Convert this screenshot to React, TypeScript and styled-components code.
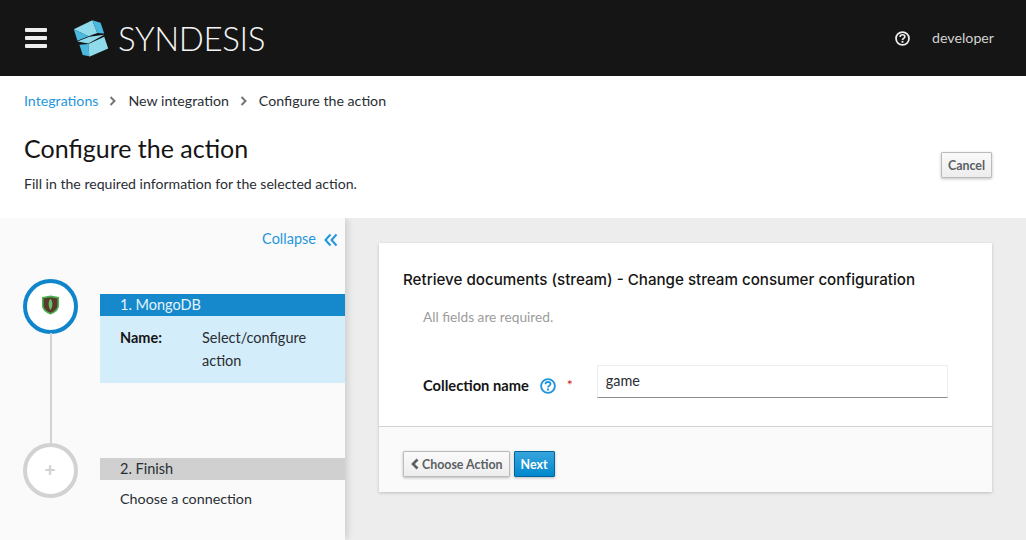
import styled, { createGlobalStyle } from 'styled-components';

const GlobalStyle = createGlobalStyle`
  html, body {
    margin: 0;
    padding: 0;
    height: 540px;
    overflow: hidden;
    background: #ededed;
    font-family: "Lato", "Liberation Sans", sans-serif;
    color: #151515;
    font-size: 14px;
  }
  * { box-sizing: border-box; }
`;

const Page = styled.div`
  width: 1026px;
  height: 540px;
  display: flex;
  flex-direction: column;
  overflow: hidden;
`;

const TopBar = styled.header`
  height: 76px;
  flex: none;
  background: #151515;
  display: flex;
  align-items: center;
  padding: 0 32px 0 25px;
`;

const Burger = styled.div`
  width: 22px;
  display: flex;
  flex-direction: column;
  gap: 4px;
  margin-right: 25px;

  span {
    height: 4px;
    border-radius: 1px;
    background: #ededed;
  }
`;

const Brand = styled.div`
  display: flex;
  align-items: center;
  gap: 8px;
  flex: 1;
`;

const Wordmark = styled.span`
  color: #f5f5f5;
  font-size: 33px;
  font-weight: 300;
  letter-spacing: -0.35px;
  line-height: 1;
`;

const UserName = styled.span`
  color: #d2d2d2;
  font-size: 14.2px;
  margin-left: 22px;
  position: relative;
  top: -1px;
`;

const Breadcrumbs = styled.nav`
  height: 50px;
  flex: none;
  background: #fff;
  display: flex;
  align-items: center;
  padding: 0 24px 1px;
  font-size: 14.2px;
  gap: 11px;
  color: #292e34;

  a {
    color: #1f96dc;
    text-decoration: none;
  }
`;

const PageHeader = styled.div`
  height: 92px;
  flex: none;
  background: #fff;
  display: flex;
  justify-content: space-between;
  align-items: flex-start;
  padding: 0 34px 0 24px;
`;

const Heading = styled.h1`
  margin: 5px 0 0;
  font-size: 25px;
  font-weight: 400;
  line-height: 34px;
`;

const Subheading = styled.p`
  margin: 9px 0 0;
  font-size: 14.1px;
  line-height: 20px;
  color: #292e34;
`;

const Button = styled.button<{ $primary?: boolean }>`
  height: 26px;
  padding: 0 6px;
  font-family: inherit;
  font-size: 12.4px;
  font-weight: 700;
  border-radius: 1px;
  border: 1px solid ${p => (p.$primary ? '#00659c' : '#bbb')};
  color: ${p => (p.$primary ? '#fff' : '#5a5f64')};
  background: ${p => (p.$primary ? 'linear-gradient(#39a5dc, #0088ce)' : 'linear-gradient(#fafafa, #ededed)')};
  box-shadow: 0 1px 3px rgba(0, 0, 0, 0.25);
  display: inline-flex;
  align-items: center;
  gap: 3px;
`;

const BackButton = styled(Button)`
  padding: 0 6px 0 7px;
`;

const CancelButton = styled(Button)`
  margin-top: 26px;
`;

const Body = styled.div`
  flex: 1;
  display: flex;
  min-height: 0;
  overflow: hidden;
`;

const Sidebar = styled.aside`
  width: 345px;
  flex: none;
  background: #fafafa;
  box-shadow: 4px 0 6px -1px rgba(0, 0, 0, 0.12);
  display: flex;
  flex-direction: column;
`;

const Collapse = styled.div`
  height: 61px;
  padding: 12px 7px 0 0;
  display: flex;
  justify-content: flex-end;
  align-items: flex-start;
  gap: 8px;
  color: #1f96dc;
  font-size: 14.5px;
  line-height: 18px;

  svg {
    margin-top: 3px;
  }
`;

const Step = styled.div<{ $height: number }>`
  display: flex;
  height: ${p => p.$height}px;
  padding-left: 23px;
  position: relative;
`;

const Circle = styled.div<{ $active?: boolean }>`
  width: 55px;
  height: 55px;
  flex: none;
  border-radius: 50%;
  background: #fff;
  border: 4px solid ${p => (p.$active ? '#0f86cc' : '#d2d2d2')};
  display: flex;
  align-items: center;
  justify-content: center;
  color: #d2d2d2;
  font-size: 19px;
  line-height: 1;
  font-weight: 900;
  padding: 0 1px 3px 0;
`;

const Connector = styled.div`
  position: absolute;
  left: 50px;
  top: 54px;
  bottom: 0;
  width: 2px;
  background: #d2d2d2;
`;

const StepContent = styled.div<{ $offset: number }>`
  margin: ${p => p.$offset}px 0 0 22px;
  flex: 1;
`;

const StepTitle = styled.div<{ $active?: boolean }>`
  height: 22px;
  padding-left: 20px;
  line-height: 22px;
  font-size: 14.5px;
  background: ${p => (p.$active ? '#1589cc' : '#d0d0d0')};
  color: ${p => (p.$active ? '#e4f3fb' : '#292e34')};
`;

const Details = styled.div`
  height: 67px;
  background: #d4edfa;
  padding: 10px 20px 0;
  display: grid;
  grid-template-columns: 82px 1fr;
  line-height: 23px;
  font-size: 14.5px;
  color: #292e34;

  b {
    font-weight: 700;
    color: #151515;
  }
`;

const StepHint = styled.div`
  padding: 9px 20px 0;
  line-height: 20px;
  font-size: 14.3px;
  color: #292e34;
`;

const Main = styled.main`
  flex: 1;
  padding: 25px 34px 0;
`;

const Card = styled.section`
  width: 613px;
  height: 249px;
  background: #fff;
  box-shadow: 0 1px 3px rgba(0, 0, 0, 0.2);
  display: flex;
  flex-direction: column;
`;

const CardBody = styled.div`
  height: 183px;
  padding: 26px 24px 0;
`;

const CardTitle = styled.h2`
  margin: 0;
  font-family: "Inter", "Liberation Sans", sans-serif;
  font-size: 15.15px;
  line-height: 22px;
  font-weight: 500;
  white-space: nowrap;
`;

const FieldNote = styled.p`
  margin: 16px 0 0 20px;
  font-size: 13.7px;
  line-height: 20px;
  color: #9c9c9c;
`;

const Field = styled.div`
  margin: 38px 0 0 20px;
  display: flex;
  align-items: center;
`;

const FieldLabel = styled.label`
  font-weight: 700;
  font-size: 14.7px;
  margin: 7px 11px 0 0;
`;

const HelpSlot = styled.span`
  display: flex;
  margin-top: 8px;
`;

const Required = styled.span`
  color: #c9190b;
  font-size: 14px;
  margin: 6px 24px 0 11px;
`;

const TextBox = styled.div`
  width: 351px;
  height: 33px;
  border: 1px solid #ededed;
  border-bottom: 1px solid #8a8d90;
  padding: 0 8px;
  line-height: 30px;
  font-size: 14.4px;
  color: #292e34;
`;

const CardFooter = styled.div`
  flex: 1;
  background: #fafafa;
  border-top: 1px solid #d2d2d2;
  display: flex;
  align-items: flex-start;
  gap: 4px;
  padding: 24px 24px 0;
`;

const HelpIcon = ({ size, color }: { size: number; color: string }) => (
  <svg width={size} height={size} viewBox="0 0 16 16" fill="none">
    <circle cx="8" cy="8" r="6.9" stroke={color} strokeWidth="1.9" />
    <path d="M5.500 6.300c0-1.400 1.100-2.300 2.500-2.300s2.500.9 2.500 2.100c0 1.800-2.500 1.700-2.500 3.400" stroke={color} strokeWidth="1.8" />
    <rect x="7" y="10.500" width="2" height="2" fill={color} />
  </svg>
);

const Chevron = () => (
  <svg width="8" height="10" viewBox="0 0 8 10">
    <path d="M1.500 1l4 4-4 4" fill="none" stroke="#72767b" strokeWidth="2" />
  </svg>
);

const Logo = () => (
  <svg width="38" height="39" viewBox="36 24 114 118">
    <polygon points="41,55 97,28 112,66 85,76" fill="#8fdbec" />
    <polygon points="97,28 122,35 133,68 112,66" fill="#4bb8de" />
    <polygon points="41,55 85,76 52,90" fill="#4bb8de" />
    <polygon points="52,92 88,78 133,72 85,98" fill="#8fdbec" />
    <polygon points="58,102 85,100 88,137 68,133" fill="#4bb8de" />
    <polygon points="85,100 133,78 145,113 88,138" fill="#8fdbec" />
  </svg>
);

const MongoIcon = () => (
  <svg width="19" height="20" viewBox="0 0 20 22">
    <path d="M1.500 3 10 1.500 18.500 3v8.500c0 4-3.500 7-8.500 9-5-2-8.500-5-8.500-9z" fill="#5a3a2c" stroke="#4caf50" strokeWidth="1.800" />
    <path d="M10 4c2.500 2.500 3 7.500 0 12.500-3-5-2.500-10 0-12.500z" fill="#6cbf6c" />
  </svg>
);

const DoubleChevron = () => (
  <svg width="14" height="14" viewBox="0 0 14 14">
    <path d="M6.500 1.500 1.500 7l5 5.500M12.500 1.500 7.500 7l5 5.500" fill="none" stroke="#1f96dc" strokeWidth="2" />
  </svg>
);

const App = () => (
  <Page>
    <GlobalStyle />
    <TopBar>
      <Burger>
        <span />
        <span />
        <span />
      </Burger>
      <Brand>
        <Logo />
        <Wordmark>SYNDESIS</Wordmark>
      </Brand>
      <HelpIcon size={15} color="#ededed" />
      <UserName>developer</UserName>
    </TopBar>
    <Breadcrumbs>
      <a href="#integrations">Integrations</a>
      <Chevron />
      <span>New integration</span>
      <Chevron />
      <span>Configure the action</span>
    </Breadcrumbs>
    <PageHeader>
      <div>
        <Heading>Configure the action</Heading>
        <Subheading>Fill in the required information for the selected action.</Subheading>
      </div>
      <CancelButton>Cancel</CancelButton>
    </PageHeader>
    <Body>
      <Sidebar>
        <Collapse>
          Collapse <DoubleChevron />
        </Collapse>
        <Step $height={164}>
          <Circle $active>
            <MongoIcon />
          </Circle>
          <Connector />
          <StepContent $offset={15}>
            <StepTitle $active>1. MongoDB</StepTitle>
            <Details>
              <b>Name:</b>
              <span>Select/configure action</span>
            </Details>
          </StepContent>
        </Step>
        <Step $height={90}>
          <Circle>+</Circle>
          <StepContent $offset={15}>
            <StepTitle>2. Finish</StepTitle>
            <StepHint>Choose a connection</StepHint>
          </StepContent>
        </Step>
      </Sidebar>
      <Main>
        <Card>
          <CardBody>
            <CardTitle>Retrieve documents (stream) - Change stream consumer configuration</CardTitle>
            <FieldNote>All fields are required.</FieldNote>
            <Field>
              <FieldLabel>Collection name</FieldLabel>
              <HelpSlot>
                <HelpIcon size={16} color="#1f96dc" />
              </HelpSlot>
              <Required>*</Required>
              <TextBox>game</TextBox>
            </Field>
          </CardBody>
          <CardFooter>
            <BackButton>
              <svg width="8" height="12" viewBox="0 0 8 12">
                <path d="M6.500 1.500 2 6l4.500 4.500" fill="none" stroke="#5a5f64" strokeWidth="2.600" />
              </svg>
              Choose Action
            </BackButton>
            <Button $primary>Next</Button>
          </CardFooter>
        </Card>
      </Main>
    </Body>
  </Page>
);

export default App;
